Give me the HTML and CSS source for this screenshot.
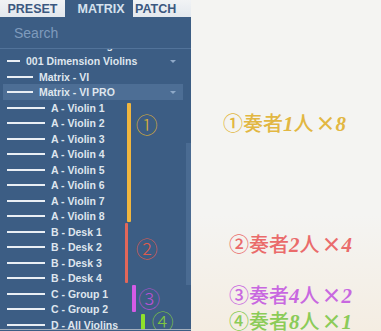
FILE: index.html
```html
<!DOCTYPE html>
<html lang="ja">
<head>
    <meta charset="UTF-8">
    <meta name="viewport" content="width=device-width, initial-scale=1.0">
    <title>Matrix</title>
    <link rel="stylesheet" href="styles.css">
</head>
<body>

<div class="shot">
    <aside class="panel">
        <nav class="tabs">
            <span class="tab tab-preset">PRESET</span>
            <span class="tab tab-matrix active">MATRIX</span>
            <span class="tab tab-patch">PATCH</span>
        </nav>
        <div class="search">Search</div>

        <div class="list">
            <ul class="rows">
                <li class="row lv1"><span class="stem"></span>Dimension Strings</li>
                <li class="row lv1"><span class="stem"></span>001 Dimension Violins<span class="arrow"></span></li>
                <li class="row lv2"><span class="stem"></span>Matrix - VI</li>
                <li class="row lv2 selected"><span class="stem"></span>Matrix - VI PRO<span class="arrow"></span></li>
                <li class="row lv3"><span class="stem"></span>A - Violin 1</li>
                <li class="row lv3"><span class="stem"></span>A - Violin 2</li>
                <li class="row lv3"><span class="stem"></span>A - Violin 3</li>
                <li class="row lv3"><span class="stem"></span>A - Violin 4</li>
                <li class="row lv3"><span class="stem"></span>A - Violin 5</li>
                <li class="row lv3"><span class="stem"></span>A - Violin 6</li>
                <li class="row lv3"><span class="stem"></span>A - Violin 7</li>
                <li class="row lv3"><span class="stem"></span>A - Violin 8</li>
                <li class="row lv3"><span class="stem"></span>B - Desk 1</li>
                <li class="row lv3"><span class="stem"></span>B - Desk 2</li>
                <li class="row lv3"><span class="stem"></span>B - Desk 3</li>
                <li class="row lv3"><span class="stem"></span>B - Desk 4</li>
                <li class="row lv3"><span class="stem"></span>C - Group 1</li>
                <li class="row lv3"><span class="stem"></span>C - Group 2</li>
                <li class="row lv3"><span class="stem"></span>D - All Violins</li>
            </ul>

            <div class="scrollbar"></div>

            <!-- hand-drawn marks over the list -->
            <span class="bar bar-1"></span>
            <span class="bar bar-2"></span>
            <span class="bar bar-3"></span>
            <span class="bar bar-4"></span>
            <span class="num num-1">①</span>
            <span class="num num-2">②</span>
            <span class="num num-3">③</span>
            <span class="num num-4">④</span>
        </div>
    </aside>

    <section class="notes">
        <p class="note note-1">①奏者<em>1</em>人<b>×<em>8</em></b></p>
        <p class="note note-2">②奏者<em>2</em>人<b>×<em>4</em></b></p>
        <p class="note note-3">③奏者<em>4</em>人<b>×<em>2</em></b></p>
        <p class="note note-4">④奏者<em>8</em>人<b>×<em>1</em></b></p>
    </section>
</div>

</body>
</html>
```

FILE: styles.css
```css
body {
    margin: 0;
    padding: 0;
    background-color: #f4f4f2;
    font-family: "Liberation Sans", Arial, sans-serif;
}
.shot {
    display: flex;
    width: 381px;
    height: 331px;
    overflow: hidden;
}

/* left panel */
.panel {
    display: flex;
    flex-direction: column;
    width: 191px;
    flex-shrink: 0;
    background-color: #3c5d84;
}
.tabs {
    display: flex;
    height: 17px;
}
.tab {
    display: flex;
    align-items: center;
    justify-content: center;
    font-size: 12.5px;
    font-weight: bold;
    color: #3b5880;
    background: linear-gradient(#f1f3f5, #e3e8ee);
}
.tab-preset {
    width: 65px;
}
.tab-matrix {
    width: 68px;
    padding-left: 4px;
    box-sizing: border-box;
}
.tab-patch {
    width: 58px;
    justify-content: flex-start;
    padding-left: 2px;
    box-sizing: border-box;
}
.tab.active {
    background: #3c5d84;
    color: #d6e2ee;
}
.search {
    height: 31px;
    padding-left: 14px;
    display: flex;
    align-items: center;
    font-size: 14px;
    color: #7f9bbd;
    border-bottom: 1px solid #52739a;
}

/* tree list */
.list {
    position: relative;
    height: 280px;
    overflow: hidden;
    border-bottom: 1px solid #a3afbd;
}
.rows {
    list-style: none;
    margin: -12.25px 0 0;
    padding: 0;
}
.row {
    display: flex;
    align-items: center;
    height: 15.5px;
    margin: 0 8px 0 3px;
    padding-left: 4px;
    font-size: 10.5px;
    font-weight: bold;
    color: #dfe6ee;
    white-space: nowrap;
}
.row:first-child {
    margin-bottom: 1px;
}
.row.selected {
    background-color: #4d6e95;
}
.stem {
    height: 2px;
    margin-right: 6px;
    background-color: #e9eef4;
    flex-shrink: 0;
}
.lv1 .stem {
    width: 13px;
}
.lv2 .stem {
    width: 26px;
}
.lv3 .stem {
    width: 38px;
}
.arrow {
    margin-left: auto;
    margin-right: 7px;
    width: 0;
    height: 0;
    border-left: 3px solid transparent;
    border-right: 3px solid transparent;
    border-top: 3px solid #8fa9c8;
}
.scrollbar {
    position: absolute;
    right: 0;
    top: 94px;
    width: 5px;
    height: 142px;
    background-color: #4a6b92;
}

/* marks */
.bar {
    position: absolute;
    width: 3.5px;
    border-radius: 1px;
}
.bar-1 {
    left: 127px;
    top: 54px;
    height: 119px;
    background-color: #f0b63f;
}
.bar-2 {
    left: 124.5px;
    top: 174px;
    height: 60px;
    background-color: #e2675a;
}
.bar-3 {
    left: 132px;
    top: 236px;
    height: 27px;
    background-color: #d45be6;
}
.bar-4 {
    left: 141px;
    top: 265px;
    height: 20px;
    background-color: #8fe02b;
}
.num {
    position: absolute;
    width: 24px;
    height: 24px;
    line-height: 24px;
    text-align: center;
    font-family: "Noto Sans CJK JP", sans-serif;
    font-size: 22px;
    font-weight: 300;
}
.num-1 {
    left: 134.7px;
    top: 61.7px;
    color: #d6ac38;
}
.num-2 {
    left: 134.7px;
    top: 185.7px;
    color: #de5b4d;
}
.num-3 {
    left: 137.3px;
    top: 236.3px;
    color: #b552d2;
}
.num-4 {
    left: 150.7px;
    top: 259px;
    color: #80c640;
}

/* notes on the right */
.notes {
    flex: 1;
    display: flex;
    flex-direction: column;
    padding: 112px 0 0 32px;
    background: linear-gradient(#f4f4f2 65%, #f4ede2);
}
.note {
    margin: 0;
    height: 22px;
    line-height: 22px;
    font-family: "Noto Sans CJK JP", sans-serif;
    font-size: 20px;
    font-weight: 500;
    white-space: nowrap;
}
.note em {
    font-family: "Liberation Serif", serif;
    font-style: italic;
    font-weight: bold;
    font-size: 21px;
    line-height: 1;
}
.note b {
    margin-left: 2px;
    font-weight: bold;
}
.note-1 {
    color: #e2b742;
}
.note-2 {
    margin: 99px 0 0 6px;
    color: #ea6b6b;
}
.note-3 {
    margin: 29px 0 0 6px;
    color: #c868e0;
}
.note-4 {
    margin: 4px 0 0 6px;
    color: #8bcb58;
}
```
